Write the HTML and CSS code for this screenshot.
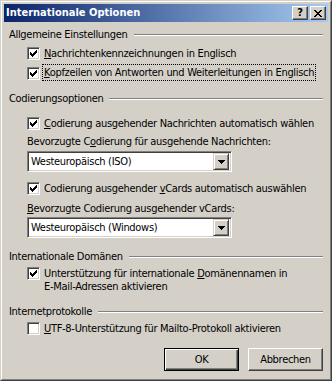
FILE: index.html
```html
<!doctype html>
<html lang="de">
	<head>
		<meta charset="UTF-8" />
		<title>Internationale Optionen</title>
		<link rel="stylesheet" href="styles.css">
	</head>
	<body>
		<div class="window">
			<div class="frame">
				<div class="titlebar">
					<span class="title">Internationale Optionen</span>
					<div class="title-buttons">
						<span class="tbtn help">?</span>
						<span class="tbtn close">
							<svg width="8" height="7" viewBox="0 0 8 7" shape-rendering="crispEdges"><path d="M0 0h2v1h-2zM6 0h2v1h-2zM1 1h2v1h-2zM5 1h2v1h-2zM2 2h4v1h-4zM3 3h2v1h-2zM2 4h4v1h-4zM1 5h2v1h-2zM5 5h2v1h-2zM0 6h2v1h-2zM6 6h2v1h-2z" fill="#000"/></svg>
						</span>
					</div>
				</div>

				<div class="content">
					<!-- Allgemeine Einstellungen -->
					<div class="group-head head-1"><span>Allgemeine Einstellungen</span><i class="etch"></i></div>
					<div class="check-row cb-1">
						<span class="checkbox checked"></span>
						<span class="check-label"><u>N</u>achrichtenkennzeichnungen in Englisch</span>
					</div>
					<div class="check-row cb-2">
						<span class="checkbox checked"></span>
						<span class="check-label focus"><u>K</u>opfzeilen von Antworten und Weiterleitungen in Englisch</span>
					</div>

					<!-- Codierungsoptionen -->
					<div class="group-head head-2"><span>Codierungsoptionen</span><i class="etch"></i></div>
					<div class="check-row cb-3">
						<span class="checkbox checked"></span>
						<span class="check-label"><u>C</u>odierung ausgehender Nachrichten automatisch wählen</span>
					</div>
					<div class="field-label label-1">Bevorzugte C<u>o</u>dierung für ausgehende Nachrichten:</div>
					<div class="combo combo-1">
						<span class="combo-text">Westeuropäisch (ISO)</span>
						<span class="combo-btn"><svg width="7" height="4" viewBox="0 0 7 4" shape-rendering="crispEdges"><path d="M0 0h7v1h-7zM1 1h5v1h-5zM2 2h3v1h-3zM3 3h1v1h-1z" fill="#000"/></svg></span>
					</div>
					<div class="check-row cb-4">
						<span class="checkbox checked"></span>
						<span class="check-label">Codierung ausgehender <u>v</u>Cards automatisch auswählen</span>
					</div>
					<div class="field-label label-2"><u>B</u>evorzugte Codierung ausgehender vCards:</div>
					<div class="combo combo-2">
						<span class="combo-text">Westeuropäisch (Windows)</span>
						<span class="combo-btn"><svg width="7" height="4" viewBox="0 0 7 4" shape-rendering="crispEdges"><path d="M0 0h7v1h-7zM1 1h5v1h-5zM2 2h3v1h-3zM3 3h1v1h-1z" fill="#000"/></svg></span>
					</div>

					<!-- Internationale Domänen -->
					<div class="group-head head-3"><span>Internationale Domänen</span><i class="etch"></i></div>
					<div class="check-row cb-5">
						<span class="checkbox checked"></span>
						<span class="check-label">Unterstützung für internationale <u>D</u>omänennamen in<br>E-Mail-Adressen aktivieren</span>
					</div>

					<!-- Internetprotokolle -->
					<div class="group-head head-4"><span>Internetprotokolle</span><i class="etch"></i></div>
					<div class="check-row cb-6">
						<span class="checkbox"></span>
						<span class="check-label"><u>U</u>TF-8-Unterstützung für Mailto-Protokoll aktivieren</span>
					</div>

					<div class="buttons">
						<button class="btn default">OK</button>
						<button class="btn">Abbrechen</button>
					</div>
				</div>
			</div>
		</div>
	</body>
</html>
```

FILE: styles.css
```css
body {
	margin: 0;
	font-family: "DejaVu Sans Condensed", "DejaVu Sans", sans-serif;
	font-stretch: condensed;
	font-size: 11px;
	letter-spacing: -0.3px;
	color: #000;
	background: #d4d0c8;
	white-space: nowrap;
}
.window {
	width: 332px;
	height: 381px;
	box-sizing: border-box;
	border: 1px solid;
	border-color: #d4d0c8 #404040 #404040 #d4d0c8;
	overflow: hidden;
}
.frame {
	height: 100%;
	box-sizing: border-box;
	border: 1px solid;
	border-color: #fff #808080 #808080 #fff;
	padding: 2px;
	background: #d4d0c8;
}
.titlebar {
	height: 18px;
	display: flex;
	align-items: center;
	justify-content: space-between;
	padding: 0 2px;
	background: linear-gradient(to right, #0a246a, #a6caf0);
}
.title {
	color: #fff;
	font-weight: bold;
	line-height: 18px;
	letter-spacing: 0;
}
.title-buttons {
	display: flex;
	gap: 2px;
}
.tbtn {
	width: 16px;
	height: 14px;
	box-sizing: border-box;
	display: flex;
	align-items: center;
	justify-content: center;
	background: #d4d0c8;
	border: 1px solid;
	border-color: #fff #404040 #404040 #fff;
	box-shadow: inset -1px -1px #808080;
}
.help {
	font-weight: bold;
	font-size: 11px;
	line-height: 12px;
	letter-spacing: 0;
	font-family: "DejaVu Sans", sans-serif;
}
.content {
	padding: 0 5px;
}
.group-head {
	display: flex;
	align-items: center;
	height: 13px;
	line-height: 13px;
}
.etch {
	flex: 1;
	margin-left: 6px;
	border-top: 1px solid #808080;
	border-bottom: 1px solid #fff;
}
.check-row {
	display: flex;
	align-items: flex-start;
	margin-left: 18px;
	line-height: 13px;
}
.checkbox {
	flex: none;
	width: 13px;
	height: 13px;
	box-sizing: border-box;
	background: #fff;
	border: 1px solid;
	border-color: #808080 #fff #fff #808080;
	box-shadow: inset 1px 1px #404040, inset -1px -1px #d4d0c8;
}
.checkbox.checked {
	background: #fff url("data:image/svg+xml,%3Csvg xmlns='http://www.w3.org/2000/svg' width='7' height='7' shape-rendering='crispEdges'%3E%3Cpath d='M0 2h1v3h-1zM1 3h1v3h-1zM2 4h1v3h-1zM3 3h1v3h-1zM4 2h1v3h-1zM5 1h1v3h-1zM6 0h1v3h-1z'/%3E%3C/svg%3E") no-repeat 2px 2px;
}
.check-label {
	margin-left: 3px;
	padding: 0 1px;
}
.check-label.focus {
	outline: 1px dotted #000;
	outline-offset: 0;
	line-height: 13px;
	padding: 1px 1px 0;
	margin-top: -2px;
	height: 14px;
}
.field-label {
	margin-left: 18px;
	height: 13px;
	line-height: 13px;
}
.combo {
	margin-left: 18px;
	width: 205px;
	height: 21px;
	box-sizing: border-box;
	display: flex;
	align-items: center;
	background: #fff;
	border: 1px solid;
	border-color: #808080 #fff #fff #808080;
	box-shadow: inset 1px 1px #404040, inset -1px -1px #d4d0c8;
	padding: 2px;
}
.combo-text {
	flex: 1;
	padding-left: 1px;
}
.combo-btn {
	width: 16px;
	height: 17px;
	box-sizing: border-box;
	display: flex;
	align-items: center;
	justify-content: center;
	background: #d4d0c8;
	border: 1px solid;
	border-color: #d4d0c8 #404040 #404040 #d4d0c8;
	box-shadow: inset 1px 1px #fff, inset -1px -1px #808080;
}
.buttons {
	display: flex;
	justify-content: flex-end;
	gap: 9px;
	margin-top: 13px;
}
.btn {
	width: 75px;
	height: 23px;
	box-sizing: border-box;
	font: inherit;
	letter-spacing: inherit;
	color: #000;
	background: #d4d0c8;
	border: 1px solid;
	border-color: #fff #404040 #404040 #fff;
	box-shadow: inset -1px -1px #808080;
	padding: 0;
}
.btn.default {
	border: 1px solid #000;
	box-shadow: inset 1px 1px #fff, inset -1px -1px #404040, inset -2px -2px #808080;
}

/* vertical rhythm of the dialog */
.head-1 { margin-top: 6px; }
.cb-1 { margin-top: 6px; }
.cb-2 { margin-top: 7px; }
.head-2 { margin-top: 12px; }
.cb-3 { margin-top: 12px; }
.label-1 { margin-top: 5px; }
.combo-1 { margin-top: 3px; }
.cb-4 { margin-top: 10px; }
.label-2 { margin-top: 7px; }
.combo-2 { margin-top: 2px; }
.head-3 { margin-top: 12px; }
.cb-5 { margin-top: 4px; }
.head-4 { margin-top: 12px; }
.cb-6 { margin-top: 4px; }
```
